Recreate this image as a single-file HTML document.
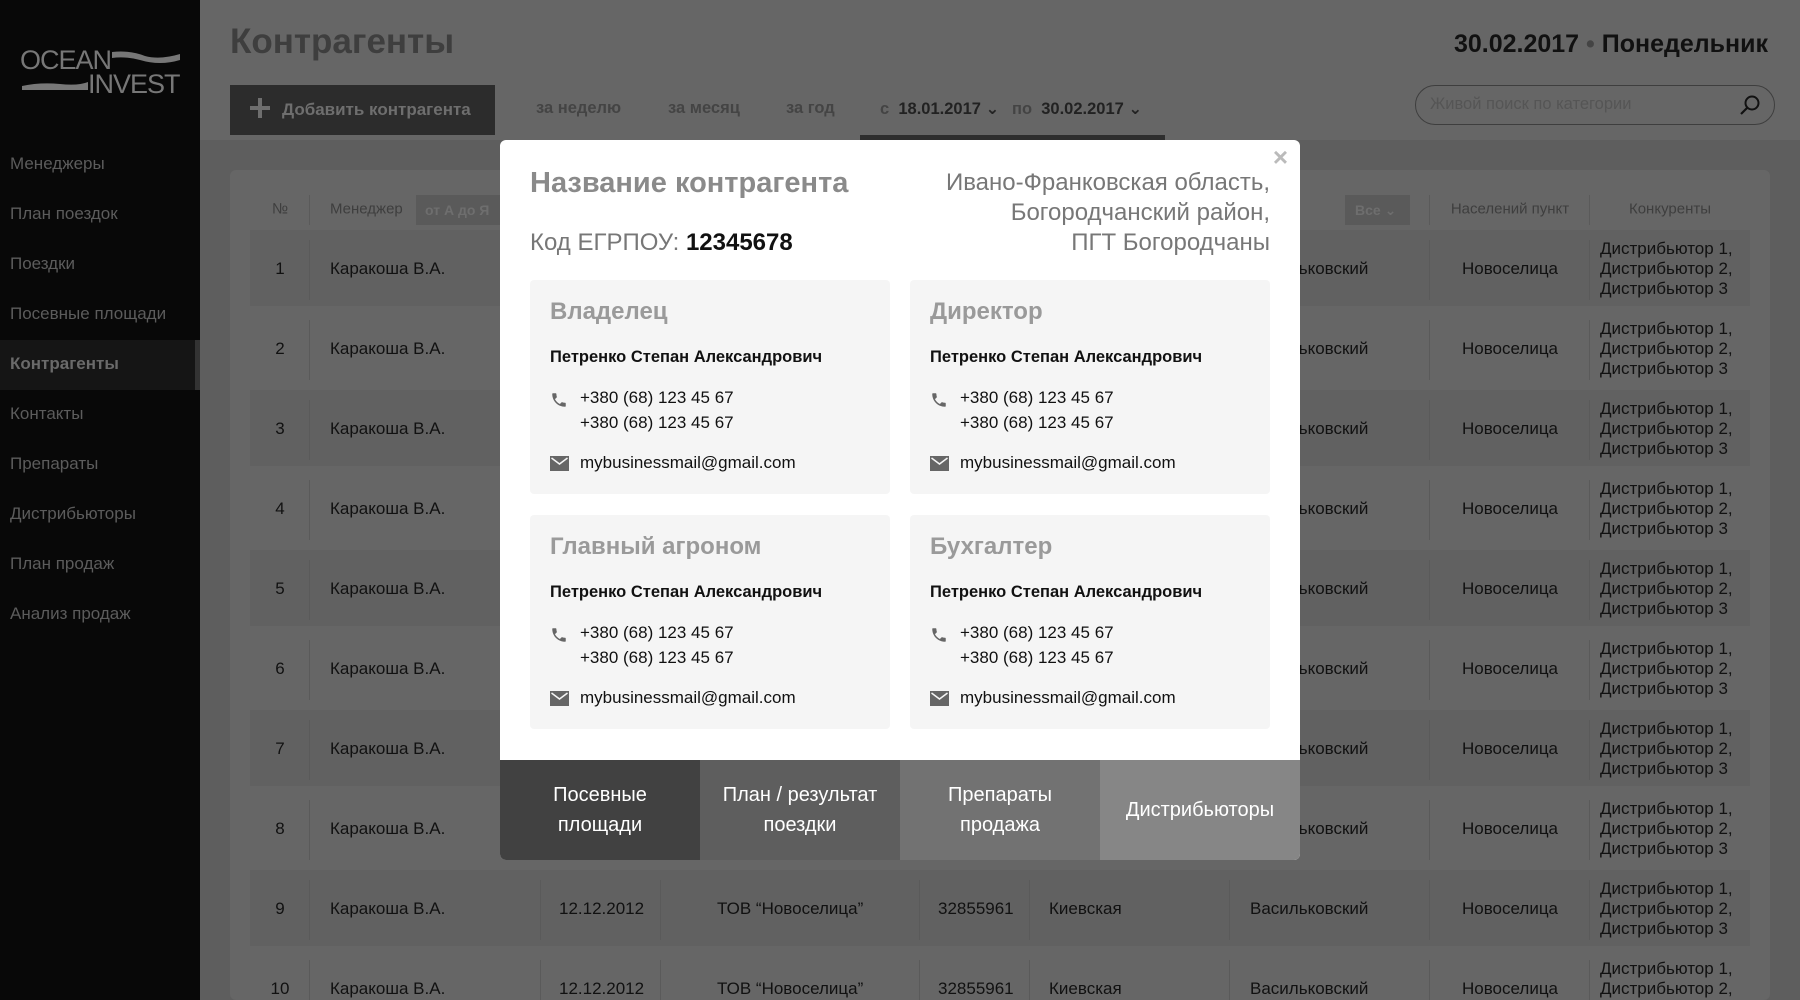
<!DOCTYPE html>
<html><head><meta charset="utf-8"><style>
*{margin:0;padding:0;box-sizing:border-box}
html{width:1800px;height:1000px;overflow:hidden}
body{width:1800px;height:1000px;overflow:hidden;background:#5e5e5e;font-family:"Liberation Sans","DejaVu Sans",sans-serif;position:relative}
.abs{position:absolute}
.side{left:0;top:0;width:200px;height:1000px;background:#080808}
.nav{position:absolute;left:10px;font-size:17px;color:#5c5c5c;transform:translateY(-50%)}
.head{left:200px;top:0;width:1600px;height:140px;background:#666}
.panel{left:230px;top:170px;width:1540px;height:830px;background:#666;border-radius:6px}
.row{position:absolute;left:250px;width:1500px;height:76px}
.c{position:absolute;font-size:17px;color:#111;transform:translateY(-50%);white-space:nowrap}
.vl{position:absolute;width:1px;background:#5a5a5a}
.card{position:absolute;width:360px;height:214px;background:#f5f5f5;border-radius:4px}
.card h3{position:absolute;left:20px;top:18px;font-size:24px;color:#9a9a9a;font-weight:bold}
.card .nm{position:absolute;left:20px;top:68px;font-size:16.5px;font-weight:bold;color:#111}
.card .t{position:absolute;left:50px;font-size:17px;color:#111}
.tab{position:absolute;top:620px;height:100px;width:200px;color:#fff;font-size:20px;line-height:30px;text-align:center;display:flex;align-items:center;justify-content:center}
</style></head><body>
<div class="abs side"></div>
<div class="abs" style="left:20px;top:48px;color:#777;font-size:27px;line-height:24px;letter-spacing:-1px">
<div>OCEAN</div><div style="padding-left:68px">INVEST</div></div>
<svg class="abs" style="left:20px;top:48px" width="162" height="46"><path d="M92 4 Q110 2 125 8 Q140 12 160 6 L160 12 Q140 18 120 12 Q105 8 92 10Z" fill="#777"/><path d="M2 38 Q20 34 40 36 Q58 38 68 34 L68 42 L2 42Z" fill="#777"/></svg>
<div class="nav" style="top:164px">Менеджеры</div>
<div class="nav" style="top:214px">План поездок</div>
<div class="nav" style="top:264px">Поездки</div>
<div class="nav" style="top:314px">Посевные площади</div>
<div class="abs" style="left:0;top:340px;width:200px;height:50px;background:#151515;border-right:5px solid #333"></div>
<div class="nav" style="top:364px;font-weight:bold;color:#6a6a6a">Контрагенты</div>
<div class="nav" style="top:414px">Контакты</div>
<div class="nav" style="top:464px">Препараты</div>
<div class="nav" style="top:514px">Дистрибьюторы</div>
<div class="nav" style="top:564px">План продаж</div>
<div class="nav" style="top:614px">Анализ продаж</div>

<div class="abs head"></div>
<div class="abs" style="left:230px;top:22px;font-size:35px;font-weight:bold;color:#3e3e3e">Контрагенты</div>
<div class="abs" style="right:32px;top:30px;font-size:25px;font-weight:bold;color:#111">30.02.2017 <span style="color:#444">•</span> Понедельник</div>
<div class="abs" style="left:230px;top:85px;width:265px;height:50px;background:#2c2c2c;color:#6e6e6e;font-weight:bold;font-size:17px;line-height:50px;padding-left:52px">Добавить контрагента</div>
<div class="abs" style="left:250px;top:106px;width:20px;height:4px;background:#6e6e6e"></div>
<div class="abs" style="left:258px;top:98px;width:4px;height:20px;background:#6e6e6e"></div>
<div class="abs" style="left:536px;top:99px;font-size:16.5px;font-weight:bold;color:#444">за неделю</div>
<div class="abs" style="left:668px;top:99px;font-size:16.5px;font-weight:bold;color:#444">за месяц</div>
<div class="abs" style="left:786px;top:99px;font-size:16.5px;font-weight:bold;color:#444">за год</div>
<div class="abs" style="left:880px;top:99px;font-size:16.5px;font-weight:bold;color:#444">с &nbsp;<span style="color:#222">18.01.2017 ⌄</span></div>
<div class="abs" style="left:1012px;top:99px;font-size:16.5px;font-weight:bold;color:#444">по &nbsp;<span style="color:#222">30.02.2017 ⌄</span></div>
<div class="abs" style="left:860px;top:135px;width:305px;height:5px;background:#2e2e2e"></div>
<div class="abs" style="left:1415px;top:85px;width:360px;height:40px;border:1.5px solid #3e3e3e;border-radius:20px;color:#555;font-size:16.5px;line-height:37px;padding-left:14px">Живой поиск по категории</div>
<svg class="abs" style="left:1738px;top:93px" width="24" height="24"><circle cx="14" cy="10" r="6.5" fill="none" stroke="#111" stroke-width="2"/><path d="M9.5 14.5 L3 21" stroke="#111" stroke-width="2.2"/></svg>

<div class="abs panel"></div>
<div class="c" style="left:272px;top:209px;font-size:15px;color:#3e3e3e">№</div>
<div class="vl" style="left:309px;top:195px;height:30px"></div>
<div class="c" style="left:330px;top:209px;font-size:15px;color:#3e3e3e">Менеджер</div>
<div class="abs" style="left:416px;top:195px;width:90px;height:30px;background:#5a5a5a;color:#6e6e6e;font-weight:bold;font-size:14px;line-height:30px;padding-left:9px">от А до Я</div>
<div class="abs" style="left:1345px;top:195px;width:65px;height:30px;background:#5a5a5a;color:#6e6e6e;font-weight:bold;font-size:14px;line-height:30px;padding-left:10px">Все ⌄</div>
<div class="vl" style="left:1429px;top:195px;height:30px"></div>
<div class="c" style="left:1510px;top:209px;font-size:15px;color:#3e3e3e;transform:translate(-50%,-50%)">Населений пункт</div>
<div class="vl" style="left:1589px;top:195px;height:30px"></div>
<div class="c" style="left:1670px;top:209px;font-size:15px;color:#3e3e3e;transform:translate(-50%,-50%)">Конкуренты</div>

<div id="rows" style="position:absolute;left:0;top:0;width:1800px;height:1000px;overflow:hidden"></div>
<script>
var h='';
for(var i=0;i<10;i++){
 var rt=230+i*80, cy=rt+39;
 if(i%2==0) h+='<div class="row" style="top:'+rt+'px;background:#616161"></div>';
 [309,540,660,919,1029,1229,1429,1589].forEach(function(x){h+='<div class="vl" style="left:'+x+'px;top:'+(rt+10)+'px;height:60px"></div>';});
 h+='<div class="c" style="left:280px;top:'+cy+'px;transform:translate(-50%,-50%)">'+(i+1)+'</div>';
 h+='<div class="c" style="left:330px;top:'+cy+'px">Каракоша В.А.</div>';
 h+='<div class="c" style="left:559px;top:'+cy+'px">12.12.2012</div>';
 h+='<div class="c" style="left:717px;top:'+cy+'px">ТОВ “Новоселица”</div>';
 h+='<div class="c" style="left:938px;top:'+cy+'px">32855961</div>';
 h+='<div class="c" style="left:1049px;top:'+cy+'px">Киевская</div>';
 h+='<div class="c" style="left:1250px;top:'+cy+'px">Васильковский</div>';
 h+='<div class="c" style="left:1510px;top:'+cy+'px;transform:translate(-50%,-50%)">Новоселица</div>';
 h+='<div class="c" style="left:1600px;top:'+cy+'px;line-height:20px">Дистрибьютор 1,<br>Дистрибьютор 2,<br>Дистрибьютор 3</div>';
}
document.getElementById('rows').innerHTML=h;
</script>

<div class="abs" style="left:500px;top:140px;width:800px;height:720px;background:#fff;border-radius:6px;overflow:hidden">
 <div class="abs" style="right:12px;top:2px;font-size:26px;color:#bbb;font-weight:bold">×</div>
 <div class="abs" style="left:30px;top:27px;font-size:29px;font-weight:bold;color:#8a8a8a">Название контрагента</div>
 <div class="abs" style="left:30px;top:89px;font-size:24px;color:#777">Код ЕГРПОУ: <b style="color:#111">12345678</b></div>
 <div class="abs" style="right:30px;top:28px;font-size:24px;line-height:30px;color:#777;text-align:right">Ивано-Франковская область,<br>Богородчанский район,<br>ПГТ Богородчаны</div>
 <div id="cards"></div>
 <div class="tab" style="left:0;background:#414141">Посевные<br>площади</div>
 <div class="tab" style="left:200px;background:#5e5e5e">План / результат<br>поездки</div>
 <div class="tab" style="left:400px;background:#727272">Препараты<br>продажа</div>
 <div class="tab" style="left:600px;background:#868686">Дистрибьюторы</div>
</div>
<script>
var tt=['Владелец','Директор','Главный агроном','Бухгалтер'],pp=[[30,140],[410,140],[30,375],[410,375]],g='';
for(var k=0;k<4;k++){
 g+='<div class="card" style="left:'+pp[k][0]+'px;top:'+pp[k][1]+'px"><h3>'+tt[k]+'</h3><div class="nm">Петренко Степан Александрович</div>'+
 '<svg class="abs" style="left:20px;top:111px" width="18" height="18" viewBox="0 0 24 24"><path d="M6.6 10.8c1.4 2.8 3.8 5.1 6.6 6.6l2.2-2.2c.3-.3.7-.4 1-.2 1.1.4 2.3.6 3.6.6.6 0 1 .4 1 1V20c0 .6-.4 1-1 1C10.6 21 3 13.4 3 4c0-.6.4-1 1-1h3.5c.6 0 1 .4 1 1 0 1.3.2 2.5.6 3.6.1.3 0 .7-.2 1z" fill="#666"/></svg>'+
 '<div class="t" style="top:108px">+380 (68) 123 45 67</div><div class="t" style="top:133px">+380 (68) 123 45 67</div>'+
 '<svg class="abs" style="left:20px;top:176px" width="19" height="15"><rect width="19" height="15" fill="#666"/><path d="M1.5 2 L9.5 8 L17.5 2" fill="none" stroke="#f5f5f5" stroke-width="1.5"/></svg>'+
 '<div class="t" style="top:173px">mybusinessmail@gmail.com</div></div>';
}
document.getElementById('cards').innerHTML=g;
</script>
</body></html>
